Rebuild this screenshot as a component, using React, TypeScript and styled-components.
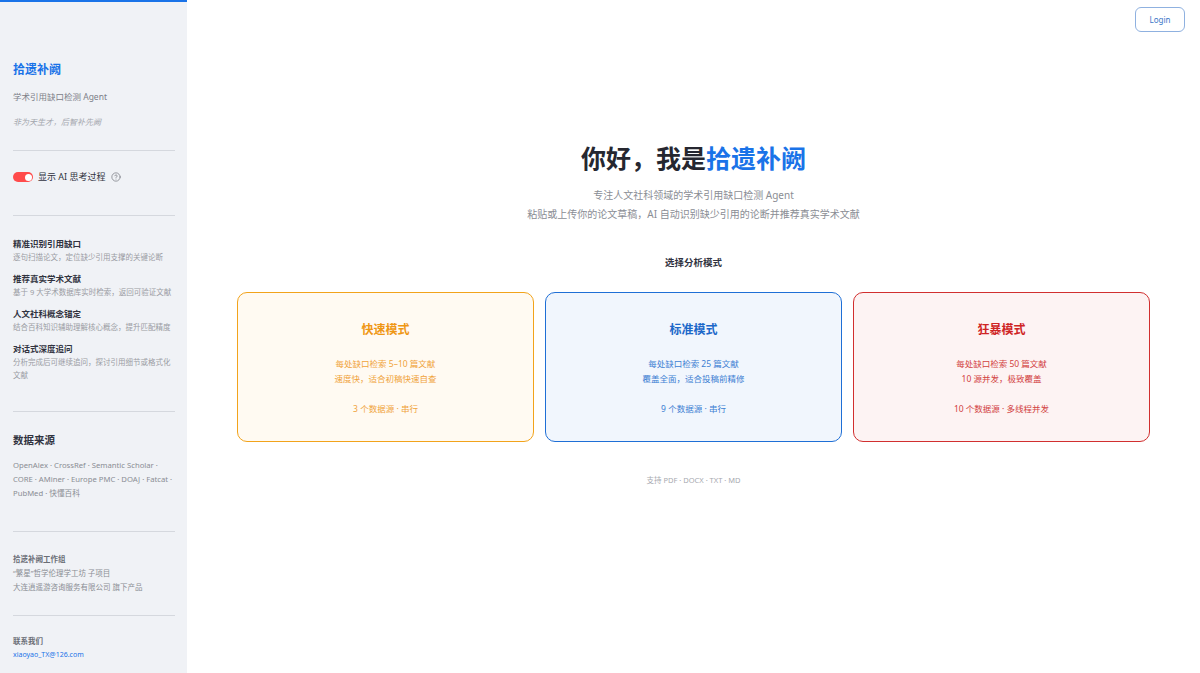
import React from 'react';
import styled, { createGlobalStyle } from 'styled-components';
import { CircleHelp } from 'lucide-react';

const GlobalStyle = createGlobalStyle`
  html, body {
    margin: 0;
    padding: 0;
    background: #ffffff;
  }
  body {
    font-family: "Noto Sans", "Noto Sans CJK SC", sans-serif;
    color: #31333f;
  }
  * {
    box-sizing: border-box;
  }
`;

const Page = styled.div`
  display: flex;
  width: 1200px;
  height: 673px;
  overflow: hidden;
`;

const Sidebar = styled.aside`
  width: 187px;
  flex-shrink: 0;
  background: #f0f2f6;
  border-top: 2px solid #1a73e8;
  padding: 59px 12px 0 13px;
  display: flex;
  flex-direction: column;
`;

const Brand = styled.div`
  font-size: 12px;
  font-weight: 700;
  color: #1a73e8;
  line-height: 18px;
`;

const Tagline = styled.div`
  margin-top: 11px;
  font-size: 8.5px;
  color: #7d8088;
  line-height: 14px;
`;

const Motto = styled.div`
  margin-top: 11px;
  font-size: 8px;
  font-style: italic;
  color: #a3a6ad;
  line-height: 14px;
`;

const Divider = styled.hr<{ $top: number; $bottom: number }>`
  border: none;
  border-top: 1px solid #d5d8de;
  margin: ${(p) => p.$top}px 0 ${(p) => p.$bottom}px;
  width: 162px;
`;

const ToggleRow = styled.div`
  display: flex;
  align-items: center;
  gap: 5px;
  font-size: 9px;
  color: #31333f;
  line-height: 14px;
`;

const Toggle = styled.span`
  position: relative;
  width: 20px;
  height: 10px;
  border-radius: 5px;
  background: #ff4b4b;
  flex-shrink: 0;

  &::after {
    content: '';
    position: absolute;
    right: 1.5px;
    top: 1.5px;
    width: 7px;
    height: 7px;
    border-radius: 50%;
    background: #ffffff;
  }
`;

const HelpIcon = styled(CircleHelp)`
  width: 10px;
  height: 10px;
  color: #6b6e76;
  margin-left: 1px;
`;

const Feature = styled.div`
  display: flex;
  flex-direction: column;
  margin-bottom: 8px;
`;

const FeatureTitle = styled.div`
  font-size: 8.5px;
  font-weight: 700;
  color: #31333f;
  line-height: 13px;
`;

const FeatureText = styled.div`
  font-size: 7.5px;
  color: #9a9ca3;
  line-height: 13px;
  margin-top: 1px;
`;

const SectionHead = styled.div`
  font-size: 10.5px;
  font-weight: 700;
  color: #31333f;
  line-height: 16px;
`;

const Sources = styled.div`
  margin-top: 10px;
  font-size: 7.7px;
  color: #8a8d94;
  line-height: 14px;
  white-space: nowrap;
`;

const SmallHead = styled.div`
  font-size: 7.5px;
  font-weight: 700;
  color: #6b6e76;
  line-height: 14px;
`;

const SmallLine = styled.div`
  font-size: 7.5px;
  color: #8a8d94;
  line-height: 14px;
`;

const Email = styled.div`
  font-size: 7px;
  color: #1a73e8;
  line-height: 14px;
`;

const Main = styled.main`
  flex: 1;
  display: flex;
  flex-direction: column;
  padding: 0 50px;
`;

const TopBar = styled.div`
  display: flex;
  justify-content: flex-end;
  padding-top: 7px;
  margin-right: -35px;
`;

const LoginButton = styled.button`
  width: 50px;
  height: 25px;
  border: 1px solid #8fb1e0;
  border-radius: 6px;
  background: #ffffff;
  color: #3b78c7;
  font-family: "Noto Sans", sans-serif;
  font-size: 8px;
  cursor: pointer;
`;

const Hero = styled.section`
  display: flex;
  flex-direction: column;
  align-items: center;
  margin-top: 108px;
`;

const Heading = styled.h1`
  margin: 0;
  font-size: 25px;
  font-weight: 700;
  color: #262730;
  line-height: 36px;
`;

const Accent = styled.span`
  color: #1a73e8;
`;

const Intro = styled.div`
  margin-top: 10px;
  text-align: center;
  font-size: 10px;
  color: #8a8d94;
  line-height: 19px;
`;

const PickLabel = styled.div`
  margin-top: 31px;
  font-size: 9.5px;
  font-weight: 700;
  color: #31333f;
  line-height: 16px;
`;

const Cards = styled.div`
  margin-top: 21px;
  display: grid;
  grid-template-columns: repeat(3, 1fr);
  gap: 11px;
`;

type Tone = { border: string; bg: string; title: string; text: string };

const tones: Record<string, Tone> = {
  fast: { border: '#f2a31b', bg: '#fffaf2', title: '#ef9714', text: '#f0a33a' },
  std: { border: '#1f6fd6', bg: '#f1f6fd', title: '#1c68c9', text: '#3d7fd3' },
  rage: { border: '#d12f2f', bg: '#fdf3f3', title: '#cf2424', text: '#d24141' },
};

const Card = styled.div<{ $tone: Tone }>`
  height: 150px;
  border: 1.5px solid ${(p) => p.$tone.border};
  border-radius: 10px;
  background: ${(p) => p.$tone.bg};
  display: flex;
  flex-direction: column;
  align-items: center;
  padding-top: 28px;
  text-align: center;
`;

const CardTitle = styled.div<{ $color: string }>`
  font-size: 12px;
  font-weight: 700;
  color: ${(p) => p.$color};
  line-height: 18px;
`;

const CardLines = styled.div<{ $color: string }>`
  margin-top: 17px;
  font-size: 8.5px;
  color: ${(p) => p.$color};
  line-height: 15px;
`;

const CardMeta = styled.div<{ $color: string }>`
  margin-top: 15px;
  font-size: 8.5px;
  color: ${(p) => p.$color};
  line-height: 15px;
`;

const Formats = styled.div`
  margin-top: 32px;
  text-align: center;
  font-size: 7.5px;
  color: #a7a9af;
  line-height: 12px;
`;

const features = [
  { title: '精准识别引用缺口', text: '逐句扫描论文，定位缺少引用支撑的关键论断' },
  { title: '推荐真实学术文献', text: '基于 9 大学术数据库实时检索，返回可验证文献' },
  { title: '人文社科概念锚定', text: '结合百科知识辅助理解核心概念，提升匹配精度' },
  { title: '对话式深度追问', text: '分析完成后可继续追问，探讨引用细节或格式化文献' },
];

const modes = [
  { key: 'fast', title: '快速模式', lines: ['每处缺口检索 5–10 篇文献', '速度快，适合初稿快速自查'], meta: '3 个数据源 · 串行' },
  { key: 'std', title: '标准模式', lines: ['每处缺口检索 25 篇文献', '覆盖全面，适合投稿前精修'], meta: '9 个数据源 · 串行' },
  { key: 'rage', title: '狂暴模式', lines: ['每处缺口检索 50 篇文献', '10 源并发，极致覆盖'], meta: '10 个数据源 · 多线程并发' },
];

export default function App() {
  return (
    <Page>
      <GlobalStyle />
      <Sidebar>
        <Brand>拾遗补阙</Brand>
        <Tagline>学术引用缺口检测 Agent</Tagline>
        <Motto>非为天生才，后智补先阙</Motto>
        <Divider $top={21} $bottom={19} />
        <ToggleRow>
          <Toggle />
          <span>显示 AI 思考过程</span>
          <HelpIcon strokeWidth={1.6} />
        </ToggleRow>
        <Divider $top={31} $bottom={21} />
        {features.map((f) => (
          <Feature key={f.title}>
            <FeatureTitle>{f.title}</FeatureTitle>
            <FeatureText>{f.text}</FeatureText>
          </Feature>
        ))}
        <Divider $top={21} $bottom={20} />
        <SectionHead>数据来源</SectionHead>
        <Sources>
          OpenAlex · CrossRef · Semantic Scholar ·
          <br />
          CORE · AMiner · Europe PMC · DOAJ · Fatcat ·
          <br />
          PubMed · 快懂百科
        </Sources>
        <Divider $top={31} $bottom={20} />
        <SmallHead>拾遗补阙工作组</SmallHead>
        <SmallLine>“繁星”哲学伦理学工坊 子项目</SmallLine>
        <SmallLine>大连逍遥游咨询服务有限公司 旗下产品</SmallLine>
        <Divider $top={21} $bottom={18} />
        <SmallHead>联系我们</SmallHead>
        <Email>xiaoyao_TX@126.com</Email>
      </Sidebar>
      <Main>
        <TopBar>
          <LoginButton>Login</LoginButton>
        </TopBar>
        <Hero>
          <Heading>
            你好，我是<Accent>拾遗补阙</Accent>
          </Heading>
          <Intro>
            专注人文社科领域的学术引用缺口检测 Agent
            <br />
            粘贴或上传你的论文草稿，AI 自动识别缺少引用的论断并推荐真实学术文献
          </Intro>
          <PickLabel>选择分析模式</PickLabel>
        </Hero>
        <Cards>
          {modes.map((m) => {
            const tone = tones[m.key];
            return (
              <Card key={m.key} $tone={tone}>
                <CardTitle $color={tone.title}>{m.title}</CardTitle>
                <CardLines $color={tone.text}>
                  {m.lines[0]}
                  <br />
                  {m.lines[1]}
                </CardLines>
                <CardMeta $color={tone.text}>{m.meta}</CardMeta>
              </Card>
            );
          })}
        </Cards>
        <Formats>支持 PDF · DOCX · TXT · MD</Formats>
      </Main>
    </Page>
  );
}
